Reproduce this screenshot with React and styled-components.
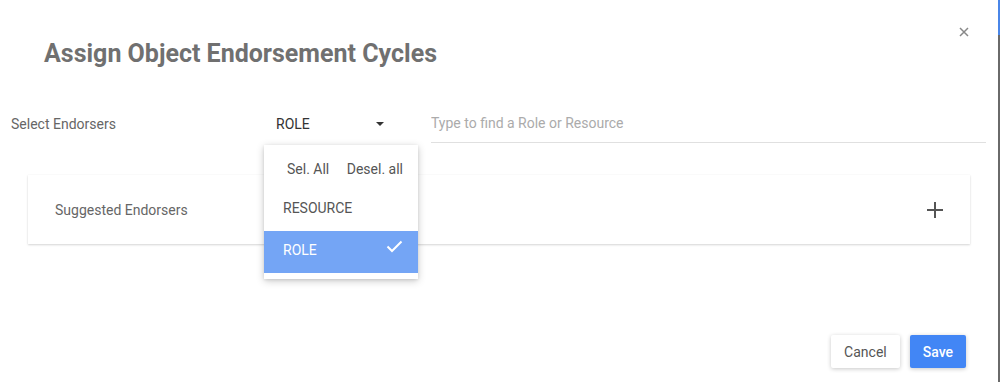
import React from 'react';
import styled, { createGlobalStyle } from 'styled-components';

const GlobalStyle = createGlobalStyle`
  html, body {
    margin: 0;
    padding: 0;
    background: #fff;
    font-family: Roboto, "Liberation Sans", Arial, sans-serif;
  }
  * {
    box-sizing: border-box;
  }
`;

const Page = styled.div`
  display: flex;
  width: 1000px;
  height: 382px;
  overflow: hidden;
`;

const Dialog = styled.div`
  width: 997px;
  height: 382px;
  display: flex;
  flex-direction: column;
  background: #fff;
`;

const ScrollStrip = styled.div`
  width: 2px;
  margin-left: 1px;
  background: linear-gradient(#4a86e8 0 35px, #6a6a6a 35px 100%);
`;

const Header = styled.div`
  display: flex;
  justify-content: space-between;
  align-items: flex-start;
  padding: 27px 28px 0 44px;
`;

const Title = styled.h1`
  margin: 12px 0 0;
  font-size: 25px;
  line-height: 30px;
  font-weight: 700;
  color: #707070;
`;

const CloseButton = styled.button`
  width: 10px;
  height: 10px;
  padding: 0;
  border: 0;
  background: none;
  display: flex;
  cursor: pointer;
`;

const FormRow = styled.div`
  display: flex;
  align-items: center;
  margin-top: 35px;
  padding: 0 11px;
  height: 39px;
`;

const Label = styled.div`
  width: 253px;
  font-size: 14px;
  color: #666;
`;

const SelectWrap = styled.div`
  position: relative;
  width: 132px;
  height: 39px;
`;

const SelectField = styled.div`
  height: 39px;
  display: flex;
  align-items: center;
  justify-content: space-between;
  padding: 0 12px;
  font-size: 14px;
  color: #333;
  cursor: pointer;
`;

const SearchInput = styled.input`
  flex: 1;
  margin-left: 35px;
  height: 39px;
  border: 0;
  border-bottom: 1px solid #e0e0e0;
  outline: none;
  padding: 0;
  font-family: inherit;
  font-size: 14px;
  color: #333;
  background: transparent;

  &::placeholder {
    color: #ababab;
  }
`;

const Menu = styled.div`
  position: absolute;
  top: calc(100% + 2px);
  left: 0;
  width: 154px;
  padding: 4px 0 6px;
  background: #fff;
  box-shadow: 0 2px 8px rgba(0, 0, 0, 0.2), 0 1px 3px rgba(0, 0, 0, 0.1);
  z-index: 10;
`;

const MenuActions = styled.div`
  height: 40px;
  display: flex;
  align-items: center;
  justify-content: space-between;
  padding: 0 15px 0 23px;
  font-size: 14px;
  color: #555;
`;

const MenuItem = styled.div`
  height: 42px;
  display: flex;
  align-items: center;
  justify-content: space-between;
  padding: 0 15px 4px 19px;
  font-size: 14px;
  color: ${(p) => (p.$selected ? '#fff' : '#555')};
  background: ${(p) => (p.$selected ? '#74a5f5' : '#fff')};
`;

const CheckMark = styled.svg`
  margin-bottom: 8px;
`;

const Card = styled.div`
  margin: 32px 27px 0 28px;
  height: 69px;
  display: flex;
  align-items: center;
  justify-content: space-between;
  padding: 0 27px;
  background: #fff;
  box-shadow: 0 1px 2px rgba(0, 0, 0, 0.16), 0 0 1px rgba(0, 0, 0, 0.06);
  font-size: 14px;
  color: #666;
`;

const Footer = styled.div`
  margin-top: auto;
  display: flex;
  justify-content: flex-end;
  gap: 10px;
  padding: 0 31px 14px 0;
`;

const Button = styled.button`
  height: 33px;
  padding: 0 13px;
  border: 0;
  border-radius: 2px;
  font-family: inherit;
  font-size: 14px;
  font-weight: ${(p) => (p.$primary ? 500 : 400)};
  color: ${(p) => (p.$primary ? '#fff' : '#555')};
  background: ${(p) => (p.$primary ? '#4286f5' : '#fff')};
  box-shadow: 0 1px 4px rgba(0, 0, 0, 0.22);
  cursor: pointer;
`;

const CloseIcon = () => (
  <svg width="10" height="10" viewBox="0 0 10 10">
    <path d="M1 1 L9 9 M9 1 L1 9" stroke="#888" strokeWidth="1.5" fill="none" />
  </svg>
);

const CaretIcon = () => (
  <svg width="8" height="4" viewBox="0 0 8 4">
    <path d="M0 0 L8 0 L4 4 Z" fill="#333" />
  </svg>
);

const CheckIcon = () => (
  <CheckMark width="17" height="13" viewBox="0 0 17 13">
    <path d="M1.5 6.5 L6 11 L15.5 1.5" stroke="#fff" strokeWidth="2" fill="none" />
  </CheckMark>
);

const PlusIcon = () => (
  <svg width="16" height="16" viewBox="0 0 16 16">
    <path d="M8 0 V16 M0 8 H16" stroke="#555" strokeWidth="2" fill="none" />
  </svg>
);

const options = [
  { name: 'RESOURCE', selected: false },
  { name: 'ROLE', selected: true },
];

const App = () => {
  return (
    <Page>
      <GlobalStyle />
      <Dialog>
        <Header>
          <Title>Assign Object Endorsement Cycles</Title>
          <CloseButton aria-label="close">
            <CloseIcon />
          </CloseButton>
        </Header>

        <FormRow>
          <Label>Select Endorsers</Label>
          <SelectWrap>
            <SelectField>
              ROLE
              <CaretIcon />
            </SelectField>
            <Menu>
              <MenuActions>
                <span>Sel. All</span>
                <span>Desel. all</span>
              </MenuActions>
              {options.map((o) => (
                <MenuItem key={o.name} $selected={o.selected}>
                  {o.name}
                  {o.selected && <CheckIcon />}
                </MenuItem>
              ))}
            </Menu>
          </SelectWrap>
          <SearchInput placeholder="Type to find a Role or Resource" />
        </FormRow>

        <Card>
          Suggested Endorsers
          <PlusIcon />
        </Card>

        <Footer>
          <Button>Cancel</Button>
          <Button $primary>Save</Button>
        </Footer>
      </Dialog>
      <ScrollStrip />
    </Page>
  );
};

export default App;
